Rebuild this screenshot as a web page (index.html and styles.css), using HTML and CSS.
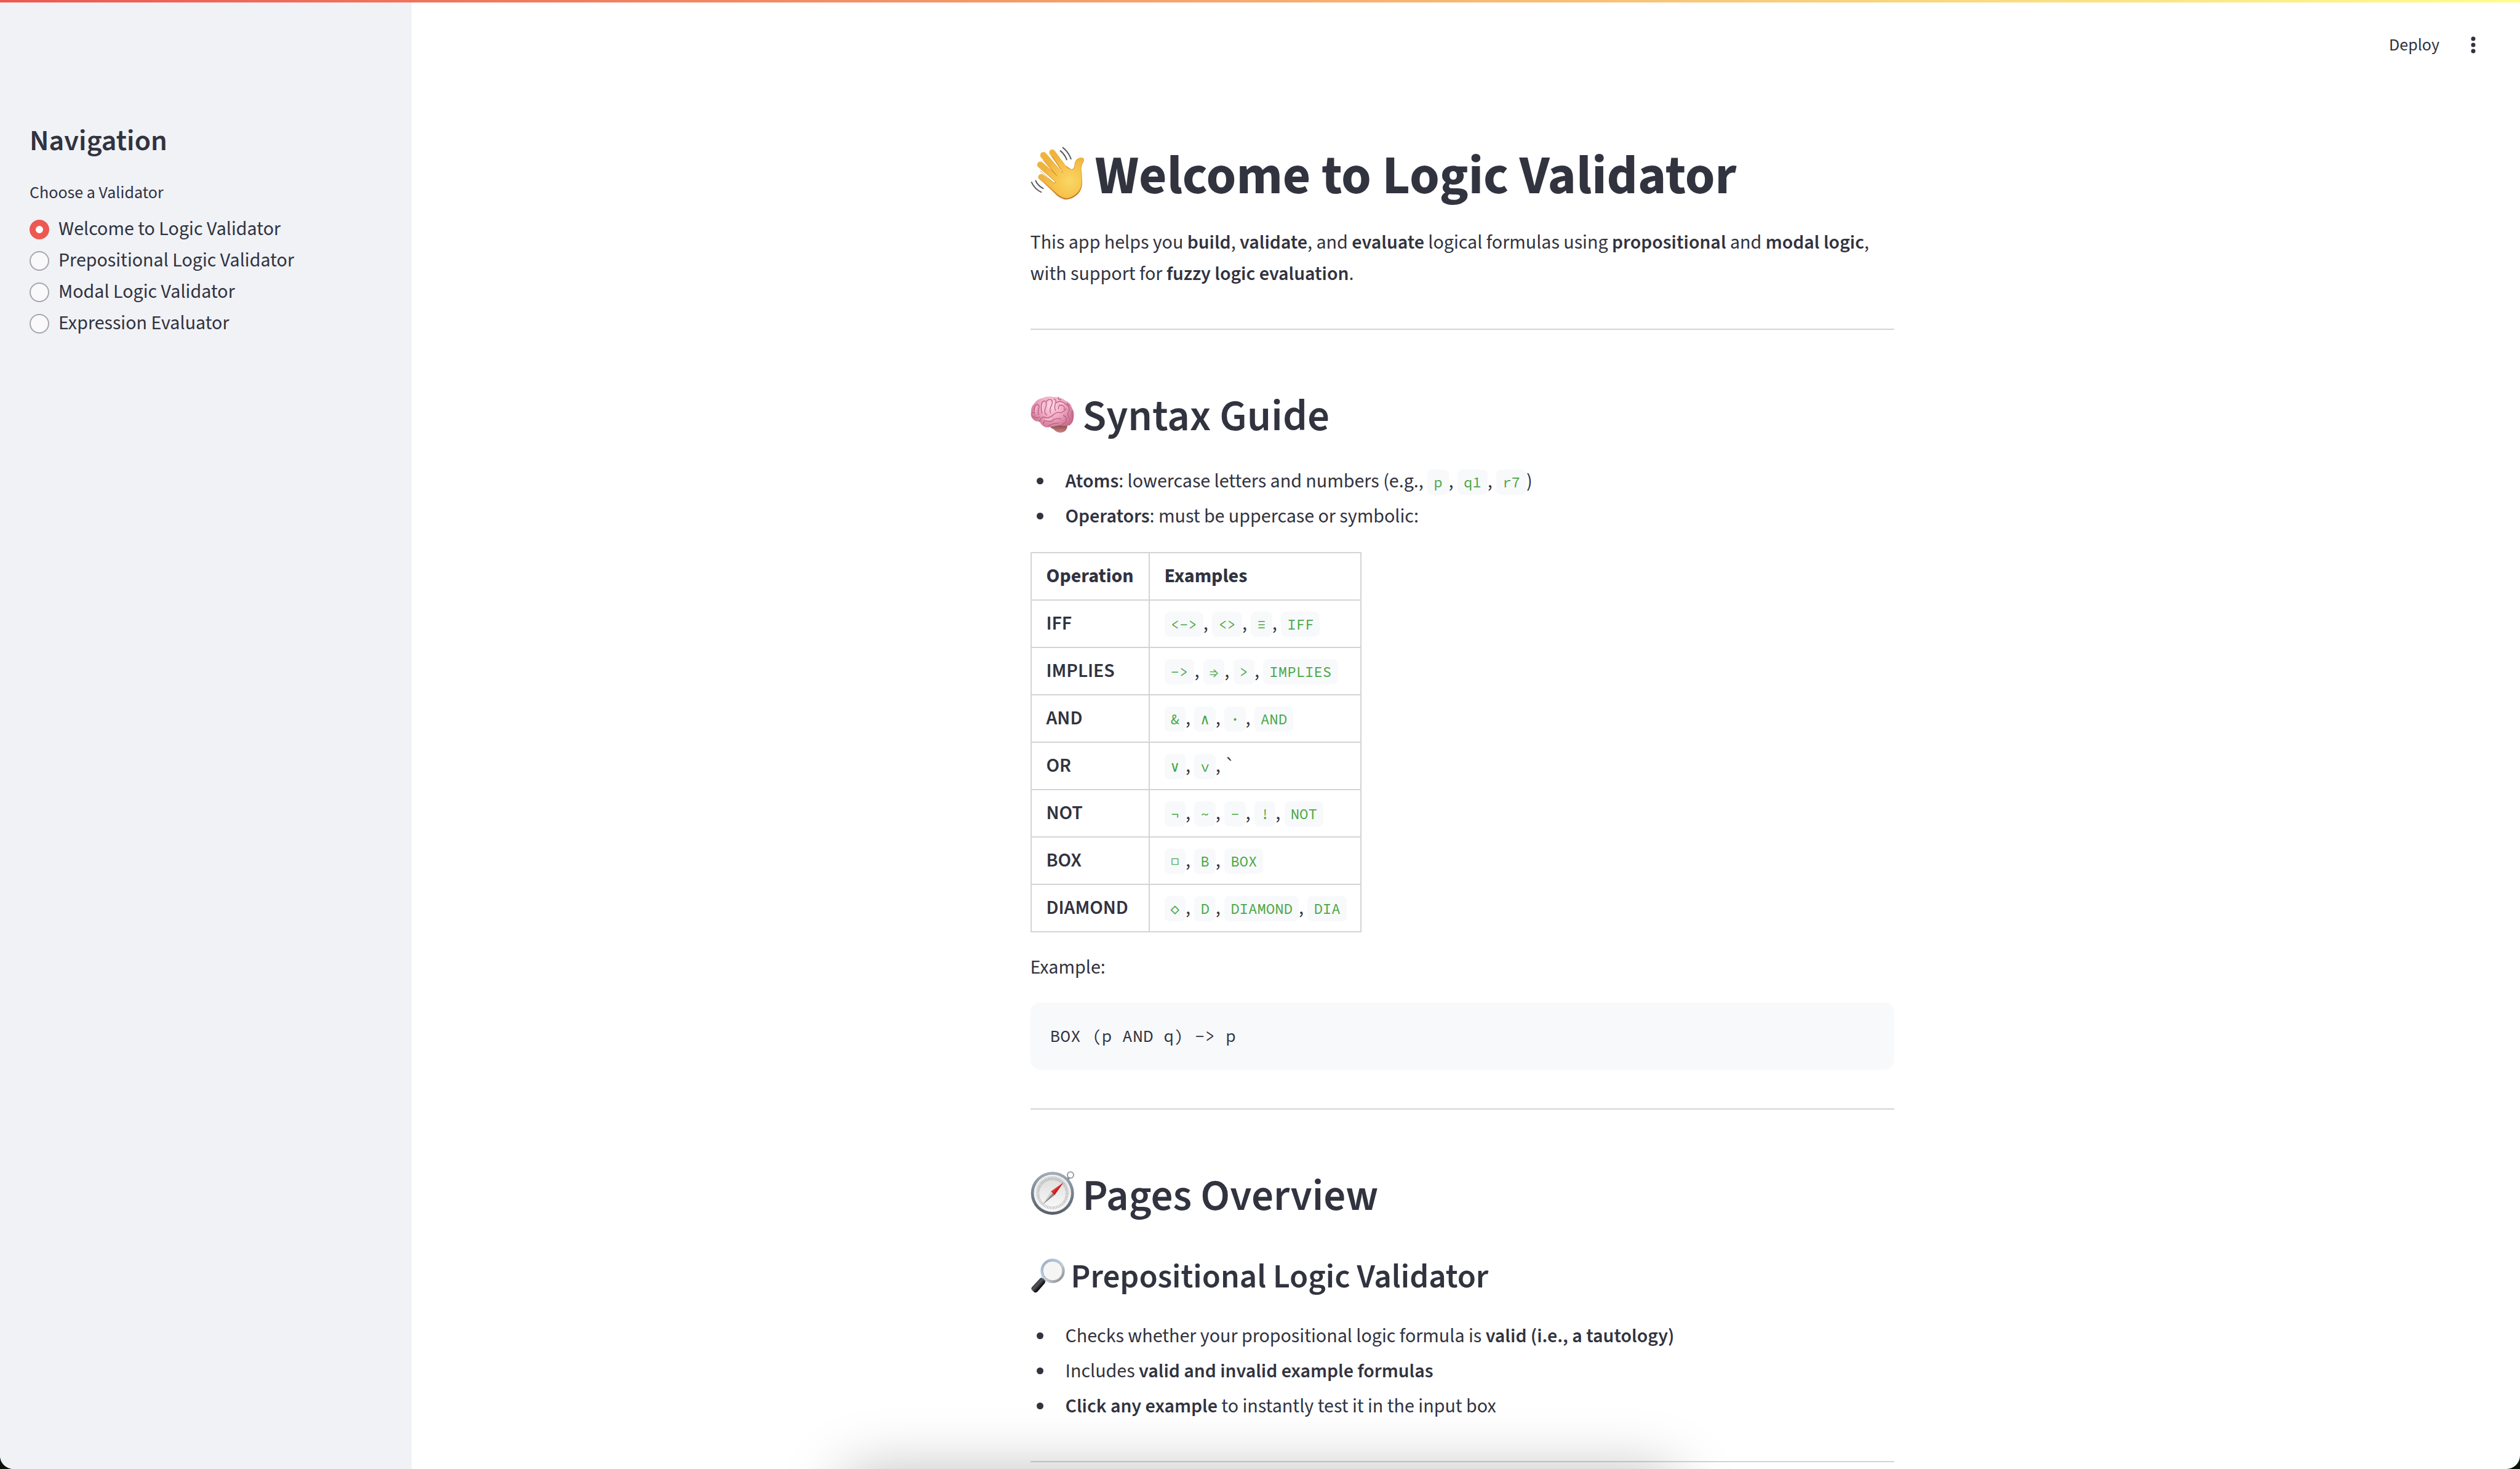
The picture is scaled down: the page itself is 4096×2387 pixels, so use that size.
FILE: index.html
```
<!DOCTYPE html>
<html lang="en">
<head>
<meta charset="utf-8">
<title>Logic Validator</title>
<link rel="stylesheet" href="styles.css">
</head>
<body>
<div class="app">
  <div class="decoration"></div>

  <aside class="sidebar">
    <h2 class="sidebar-title">Navigation</h2>
    <fieldset class="radio-group">
      <legend>Choose a Validator</legend>
      <label class="radio"><input type="radio" name="page" checked>Welcome to Logic Validator</label>
      <label class="radio"><input type="radio" name="page">Prepositional Logic Validator</label>
      <label class="radio"><input type="radio" name="page">Modal Logic Validator</label>
      <label class="radio"><input type="radio" name="page">Expression Evaluator</label>
    </fieldset>
  </aside>

  <div class="view">
    <header class="toolbar">
      <button class="deploy" type="button">Deploy</button>
      <button class="menu" type="button" aria-label="Main menu">
        <svg viewBox="0 0 24 40" width="24" height="40"><g fill="#31333f"><circle cx="12" cy="10" r="3.5"/><circle cx="12" cy="20" r="3.5"/><circle cx="12" cy="30" r="3.5"/></g></svg>
      </button>
    </header>

    <main class="content">
      <h1>
        <svg class="emoji" viewBox="66 72 264 264" aria-hidden="true">
          <defs>
            <radialGradient id="palm" gradientUnits="userSpaceOnUse" cx="255" cy="225" r="130">
              <stop offset="0" stop-color="#fad766"/><stop offset=".5" stop-color="#f7c64f"/><stop offset="1" stop-color="#f0b43e"/>
            </radialGradient>
            <linearGradient id="palmEdge" gradientUnits="userSpaceOnUse" x1="180" y1="70" x2="250" y2="316">
              <stop offset="0" stop-color="#eebb48"/><stop offset=".6" stop-color="#dd9a35"/><stop offset="1" stop-color="#c9772a"/>
            </linearGradient>
          </defs>
          <g stroke-linecap="round" fill="none" stroke="url(#palmEdge)">
            <path d="M118 206L185 255" stroke-width="29"/>
            <path d="M114 146L196 218" stroke-width="31"/>
            <path d="M129 100L212 197" stroke-width="32"/>
            <path d="M172 86L240 180" stroke-width="30"/>
          </g>
          <path fill="url(#palmEdge)" d="M108 214L178 280Q210 316 243 316Q275 313 300 286Q320 262 318 225Q315 190 314 168Q314 148 324 133Q332 118 320 112Q303 108 289 122Q280 133 280 150Q277 168 265 168L238 150L180 236Z"/>
          <g stroke-linecap="round" fill="none" stroke="url(#palm)">
            <path d="M119 206L188 255" stroke-width="24"/>
            <path d="M115 146L198 220" stroke-width="26"/>
            <path d="M130 100L214 199" stroke-width="27"/>
            <path d="M173 86L242 182" stroke-width="25"/>
          </g>
          <path fill="url(#palm)" d="M120 219L182 275Q214 308 243 310Q272 307 297 280Q316 258 315 225Q312 190 311 168Q311 148 321 131Q327 119 318 114Q304 112 292 124Q283 135 283 152Q280 173 264 171L238 160L184 238Z"/>
          <path d="M172 106L213 169M130 127L193 199M114 176L178 234" fill="none" stroke="#bd7a2b" stroke-width="3" stroke-linecap="round" opacity=".75"/>
          <path d="M222 61Q252 84 264 120M210 77Q235 96 243 124M90 222Q102 250 130 263M70 229Q84 263 120 281" fill="none" stroke="#5b5c5e" stroke-width="6"/>
        </svg>
        <span>Welcome to Logic Validator</span>
      </h1>
      <p class="intro">This app helps you <strong>build</strong>, <strong>validate</strong>, and <strong>evaluate</strong> logical formulas using <strong>propositional</strong> and <strong>modal logic</strong>, with support for <strong>fuzzy logic evaluation</strong>.</p>

      <hr>

      <h2>
        <svg class="emoji" viewBox="36 26 216 216" aria-hidden="true">
          <defs>
            <radialGradient id="brain" gradientUnits="userSpaceOnUse" cx="140" cy="80" r="120">
              <stop offset="0" stop-color="#fbd3e1"/><stop offset=".5" stop-color="#efa9c2"/><stop offset="1" stop-color="#c96c8e"/>
            </radialGradient>
            <linearGradient id="stem" x1="0" y1="0" x2="0" y2="1">
              <stop offset="0" stop-color="#8a4a4e"/><stop offset="1" stop-color="#cf8485"/>
            </linearGradient>
          </defs>
          <path fill="url(#stem)" d="M128 182Q170 168 216 178Q214 208 185 212Q162 212 150 196Q136 190 128 182Z"/>
          <path fill="url(#brain)" d="M80 158Q60 160 48 146Q34 132 39 110Q38 86 54 70Q68 48 95 43Q120 32 150 38Q185 36 205 56Q232 66 238 92Q252 112 246 138Q246 162 228 176Q205 182 180 176Q150 182 126 186Q96 190 80 158Z"/>
          <path fill="none" stroke="#bd5f83" stroke-width="4" stroke-linecap="round" stroke-linejoin="round" d="M80 158Q86 130 112 138Q130 142 146 126Q166 108 184 116Q200 108 210 96M56 104Q50 84 68 74Q82 74 76 96Q70 122 78 124M92 118Q84 86 92 64Q104 52 112 62Q116 78 106 100Q104 122 116 126M112 62Q124 44 140 54Q146 70 134 88Q128 104 134 116M150 48Q164 50 158 68Q150 88 158 104M158 68Q176 54 192 64Q206 70 222 84M172 96Q170 76 188 78Q206 84 200 98M216 70Q230 90 222 110Q212 126 226 142M196 128Q214 134 210 154Q204 168 190 172M100 168Q98 148 118 156Q140 162 150 148Q166 140 184 146M124 178Q150 164 172 166M48 132Q64 146 80 136M240 106Q234 128 244 142M172 40Q168 50 184 52M44 112Q54 118 62 112"/>
          <path fill="none" stroke="#fbdbe6" stroke-width="4" stroke-linecap="round" opacity=".8" d="M100 70Q92 88 98 108M128 62Q122 78 122 98M66 86Q58 104 64 118M150 68Q146 84 148 96M178 68Q188 68 198 72M110 148Q126 152 138 142"/>
        </svg>
        <span>Syntax Guide</span>
      </h2>
      <ul>
        <li><strong>Atoms</strong>: lowercase letters and numbers (e.g., <code>p</code>, <code>q1</code>, <code>r7</code>)</li>
        <li><strong>Operators</strong>: must be uppercase or symbolic:</li>
      </ul>

      <table>
        <thead>
          <tr><th>Operation</th><th>Examples</th></tr>
        </thead>
        <tbody>
          <tr><td><strong>IFF</strong></td><td><code>&lt;-&gt;</code>, <code>&lt;&gt;</code>, <code>≡</code>, <code>IFF</code></td></tr>
          <tr><td><strong>IMPLIES</strong></td><td><code>-&gt;</code>, <code>⇒</code>, <code>&gt;</code>, <code>IMPLIES</code></td></tr>
          <tr><td><strong>AND</strong></td><td><code>&amp;</code>, <code>∧</code>, <code>·</code>, <code>AND</code></td></tr>
          <tr><td><strong>OR</strong></td><td><code>∨</code>, <code>v</code>, `</td></tr>
          <tr><td><strong>NOT</strong></td><td><code>¬</code>, <code>~</code>, <code>-</code>, <code>!</code>, <code>NOT</code></td></tr>
          <tr><td><strong>BOX</strong></td><td><code>□</code>, <code>B</code>, <code>BOX</code></td></tr>
          <tr><td><strong>DIAMOND</strong></td><td><code>◇</code>, <code>D</code>, <code>DIAMOND</code>, <code>DIA</code></td></tr>
        </tbody>
      </table>

      <p class="example">Example:</p>
      <pre>BOX (p AND q) -&gt; p</pre>

      <hr>

      <h2>
        <svg class="emoji" viewBox="36 44 216 216" aria-hidden="true">
          <defs>
            <linearGradient id="rim" x1="0" y1="0" x2="0" y2="1">
              <stop offset="0" stop-color="#a3aebb"/><stop offset=".5" stop-color="#76828f"/><stop offset="1" stop-color="#565e69"/>
            </linearGradient>
            <linearGradient id="dial" x1="0" y1="0" x2="0" y2="1">
              <stop offset="0" stop-color="#dcdcdc"/><stop offset="1" stop-color="#fbfbfb"/>
            </linearGradient>
          </defs>
          <circle cx="231" cy="48" r="15" fill="none" stroke="#939da9" stroke-width="6"/>
          <path d="M208 68l10-10 10 8-8 14z" fill="#7f8a97"/>
          <circle cx="143" cy="137" r="105" fill="url(#rim)"/>
          <circle cx="143" cy="137" r="91" fill="#f1f2f3"/>
          <circle cx="143" cy="137" r="85" fill="url(#dial)"/>
          <circle cx="143" cy="137" r="71" fill="none" stroke="#8b8b8b" stroke-width="14" stroke-dasharray="2 5.435"/>
          <path d="M197 84L135 128L153 146Z" fill="#e0342f"/>
          <path d="M197 84L144 137L153 146Z" fill="#c41f22"/>
          <path d="M95 192L135 128L144 137Z" fill="#d2d2d2"/>
          <path d="M95 192L153 146L144 137Z" fill="#858585"/>
        </svg>
        <span>Pages Overview</span>
      </h2>
      <h3>
        <svg class="emoji" viewBox="36 462 168 168" aria-hidden="true">
          <defs>
            <linearGradient id="frame" x1="0" y1="0" x2="1" y2="1">
              <stop offset="0" stop-color="#9aa3ae"/><stop offset=".3" stop-color="#a9c8ea"/><stop offset=".6" stop-color="#c5cbd2"/><stop offset="1" stop-color="#777b80"/>
            </linearGradient>
            <linearGradient id="grip" x1="0" y1="0" x2="1" y2="1">
              <stop offset=".2" stop-color="#111"/><stop offset=".45" stop-color="#54575b"/><stop offset=".65" stop-color="#0c0d0e"/>
            </linearGradient>
          </defs>
          <path d="M94 552L108 566" stroke="#8d9094" stroke-width="9"/>
          <path d="M100 556L112 545" stroke="#7e8286" stroke-width="10"/>
          <circle cx="144" cy="513" r="54" fill="#f5f5f6" stroke="url(#frame)" stroke-width="10"/>
          <circle cx="144" cy="513" r="48" fill="none" stroke="#73777c" stroke-width="2"/>
          <path d="M84 548Q90 545 97 551L106 562Q109 567 106 573L70 614Q62 622 54 617L42 606Q37 600 42 593Z" fill="url(#grip)"/>
        </svg>
        <span>Prepositional Logic Validator</span>
      </h3>
      <ul>
        <li>Checks whether your propositional logic formula is <strong>valid (i.e., a tautology)</strong></li>
        <li>Includes <strong>valid and invalid example formulas</strong></li>
        <li><strong>Click any example</strong> to instantly test it in the input box</li>
      </ul>

      <hr>
    </main>
  </div>

  <div class="dock-shadow"></div>
</div>
</body>
</html>
```
FILE: styles.css
```
* {
  box-sizing: border-box;
}

html,
body {
  height: 100%;
  margin: 0;
  background: #0b130b;
}

body {
  font-family: "Source Sans 3", "Noto Sans CJK SC", sans-serif;
  font-size: 32px;
  line-height: 51px;
  color: #31333f;
}

.app {
  position: relative;
  display: flex;
  height: 100vh;
  overflow: hidden;
  background: #fff;
  border-radius: 0 0 22px 22px;
}

.decoration {
  position: absolute;
  top: 0;
  left: 0;
  right: 0;
  height: 4px;
  background: linear-gradient(90deg, #ec5953, #fffd8c);
}

strong {
  font-weight: 600;
}

/* Sidebar */

.sidebar {
  flex: 0 0 669px;
  padding: 200px 48px 0;
  background: #f0f2f6;
}

.sidebar-title {
  display: block;
  margin: 0 0 34px;
  font-size: 48px;
  line-height: 58px;
}

.radio-group {
  display: flex;
  flex-direction: column;
  margin: 0;
  padding: 0;
  border: 0;
}

.radio-group legend {
  margin-bottom: 13px;
  padding: 0;
  font-size: 28px;
  line-height: 42px;
}

.radio {
  display: flex;
  align-items: center;
  gap: 15px;
}

.radio input {
  appearance: none;
  width: 32px;
  height: 32px;
  margin: 0;
  border: 2px solid #a5a7ac;
  border-radius: 50%;
  background: #f9f9fb;
}

.radio input:checked {
  border: 10px solid #ec5953;
  background: #fff;
}

/* Main view */

.view {
  flex: 1;
  min-width: 0;
}

.toolbar {
  display: flex;
  justify-content: flex-end;
  align-items: center;
  gap: 43px;
  padding: 52px 64px 0;
}

.toolbar button {
  display: block;
  padding: 0;
  border: 0;
  background: none;
  font: inherit;
  font-size: 28px;
  line-height: 42px;
  color: inherit;
}

.toolbar svg {
  display: block;
}

.content {
  max-width: 1416px;
  margin: 0 auto;
  padding: 140px 12px 0 0;
}

h1,
h2,
h3 {
  display: flex;
  align-items: center;
  margin: 0;
  font-weight: 600;
}

h1 {
  gap: 17px;
  margin-bottom: 29px;
  font-size: 88px;
  line-height: 106px;
  font-weight: 700;
}

h2 {
  gap: 13px;
  font-size: 71px;
  line-height: 86px;
}

h3 {
  gap: 10px;
  margin-top: 55px;
  font-size: 55px;
  line-height: 67px;
}

.emoji {
  flex: none;
  width: 88px;
  height: 88px;
  overflow: visible;
}

h2 .emoji {
  width: 72px;
  height: 72px;
}

h3 .emoji {
  width: 56px;
  height: 56px;
}

p {
  margin: 0;
}

hr {
  height: 2px;
  margin: 63px 0 98px;
  border: 0;
  background: #d4d4d6;
}

ul {
  margin: 37px 0 32px;
  padding: 0;
  list-style: none;
}

li + li {
  margin-top: 6px;
}

li::before {
  content: "";
  display: inline-block;
  width: 11px;
  height: 11px;
  margin: 0 36px 0 10px;
  border-radius: 50%;
  background: #31333f;
  vertical-align: 5px;
}

code,
pre {
  font-family: "Source Code Pro", "Liberation Mono", monospace;
  background: #f8f9fb;
}

code {
  padding: 5px 10px;
  border-radius: 8px;
  font-size: 24px;
  line-height: 1;
  color: #48a844;
}

table {
  border-collapse: collapse;
}

th,
td {
  padding: 12px 24px;
  border: 2px solid #d4d4d6;
  text-align: left;
}

th {
  font-weight: 700;
}

td:last-child {
  padding-right: 22px;
}

.example {
  margin: 32px 0 31px;
}

pre {
  margin: 0;
  padding: 32px;
  border-radius: 16px;
  font-size: 28px;
  line-height: 45px;
}

/* Soft shadow rising from below the window edge */

.dock-shadow {
  position: absolute;
  left: 33.4%;
  bottom: -206px;
  width: 33.2%;
  height: 200px;
  border-radius: 40px;
  box-shadow: 0 0 100px rgba(0, 0, 0, 0.27);
  pointer-events: none;
}
```
